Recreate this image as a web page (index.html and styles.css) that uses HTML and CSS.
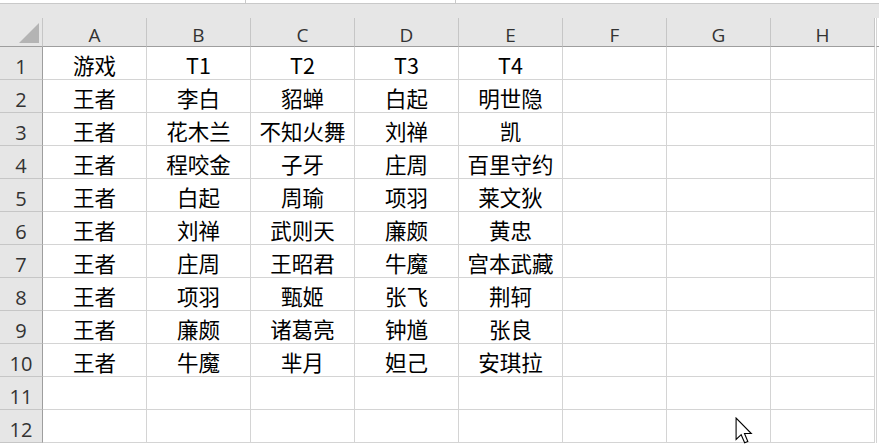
FILE: index.html
```html
<!DOCTYPE html>
<html lang="zh">
<head>
<meta charset="utf-8">
<link rel="stylesheet" href="styles.css">
</head>
<body>
<div class="sheet">
  <div class="topbar"><span class="seg s1"></span><span class="seg s2"></span></div>
  <div class="gap"></div>
  <div class="grid">
    <div class="corner"><span class="tri"></span></div>
    <div class="ch">A</div><div class="ch">B</div><div class="ch">C</div><div class="ch">D</div><div class="ch">E</div><div class="ch">F</div><div class="ch">G</div><div class="ch">H</div><div class="edge hedge"></div>

    <div class="rh">1</div><div class="c">游戏</div><div class="c">T1</div><div class="c">T2</div><div class="c">T3</div><div class="c">T4</div><div class="c"></div><div class="c"></div><div class="c"></div><div class="edge"></div>
    <div class="rh">2</div><div class="c">王者</div><div class="c">李白</div><div class="c">貂蝉</div><div class="c">白起</div><div class="c">明世隐</div><div class="c"></div><div class="c"></div><div class="c"></div><div class="edge"></div>
    <div class="rh">3</div><div class="c">王者</div><div class="c">花木兰</div><div class="c">不知火舞</div><div class="c">刘禅</div><div class="c">凯</div><div class="c"></div><div class="c"></div><div class="c"></div><div class="edge"></div>
    <div class="rh">4</div><div class="c">王者</div><div class="c">程咬金</div><div class="c">子牙</div><div class="c">庄周</div><div class="c">百里守约</div><div class="c"></div><div class="c"></div><div class="c"></div><div class="edge"></div>
    <div class="rh">5</div><div class="c">王者</div><div class="c">白起</div><div class="c">周瑜</div><div class="c">项羽</div><div class="c">莱文狄</div><div class="c"></div><div class="c"></div><div class="c"></div><div class="edge"></div>
    <div class="rh">6</div><div class="c">王者</div><div class="c">刘禅</div><div class="c">武则天</div><div class="c">廉颇</div><div class="c">黄忠</div><div class="c"></div><div class="c"></div><div class="c"></div><div class="edge"></div>
    <div class="rh">7</div><div class="c">王者</div><div class="c">庄周</div><div class="c">王昭君</div><div class="c">牛魔</div><div class="c">宫本武藏</div><div class="c"></div><div class="c"></div><div class="c"></div><div class="edge"></div>
    <div class="rh">8</div><div class="c">王者</div><div class="c">项羽</div><div class="c">甄姬</div><div class="c">张飞</div><div class="c">荆轲</div><div class="c"></div><div class="c"></div><div class="c"></div><div class="edge"></div>
    <div class="rh">9</div><div class="c">王者</div><div class="c">廉颇</div><div class="c">诸葛亮</div><div class="c">钟馗</div><div class="c">张良</div><div class="c"></div><div class="c"></div><div class="c"></div><div class="edge"></div>
    <div class="rh">10</div><div class="c">王者</div><div class="c">牛魔</div><div class="c">芈月</div><div class="c">妲己</div><div class="c">安琪拉</div><div class="c"></div><div class="c"></div><div class="c"></div><div class="edge"></div>
    <div class="rh">11</div><div class="c"></div><div class="c"></div><div class="c"></div><div class="c"></div><div class="c"></div><div class="c"></div><div class="c"></div><div class="c"></div><div class="edge"></div>
    <div class="rh">12</div><div class="c"></div><div class="c"></div><div class="c"></div><div class="c"></div><div class="c"></div><div class="c"></div><div class="c"></div><div class="c"></div><div class="edge"></div>
  </div>
  <svg class="cursor" width="19" height="29" viewBox="0 0 13 20">
    <path d="M0.7 0.7 L0.7 15.5 L4.2 12.2 L6.6 17.8 L8.8 16.9 L6.5 11.4 L11.2 11.4 Z" fill="#fff" stroke="#000" stroke-width="0.75" stroke-linejoin="miter"/>
  </svg>
</div>
</body>
</html>
```

FILE: styles.css
```css
html, body {
  margin: 0;
  padding: 0;
  background: #fff;
}
.sheet {
  position: relative;
  width: 879px;
  height: 446px;
  overflow: hidden;
  background: #fff;
}
.topbar {
  position: relative;
  height: 3px;
  background: #fff;
  border-bottom: 1px solid #c9c9c9;
}
.seg {
  position: absolute;
  top: 0;
  width: 1px;
  height: 4px;
  background: #c9c9c9;
}
.s1 { left: 245px; }
.s2 { left: 455px; }
.gap {
  height: 14px;
  background: #e6e6e6;
}
.grid {
  display: grid;
  grid-template-columns: 43px repeat(8, 104px) 4px;
  grid-template-rows: 29px repeat(12, 33px);
}
.corner {
  position: relative;
  background: #e6e6e6;
  border-right: 1px solid #c6c6c6;
  border-bottom: 1px solid #9e9e9e;
}
.tri {
  position: absolute;
  right: 3px;
  bottom: 3px;
  width: 0;
  height: 0;
  border-left: 20px solid transparent;
  border-bottom: 20px solid #b4b4b4;
}
.ch {
  background: #e6e6e6;
  border-right: 1px solid #c6c6c6;
  border-bottom: 1px solid #9e9e9e;
  display: flex;
  align-items: center;
  justify-content: center;
  padding-top: 5px;
  box-sizing: border-box;
  font-family: "Open Sans", "Liberation Sans", sans-serif;
  font-size: 19px;
  color: #333;
}
.hedge {
  background: #e6e6e6;
  border-bottom: 1px solid #9e9e9e;
}
.edge {
  background: #fff;
  border-left: 1px solid #d4d4d4;
  box-sizing: border-box;
  width: 3px;
  margin-left: 1px;
}
.rh {
  background: #e6e6e6;
  border-right: 1px solid #9e9e9e;
  border-bottom: 1px solid #c6c6c6;
  display: flex;
  align-items: center;
  justify-content: center;
  padding-top: 6px;
  box-sizing: border-box;
  font-family: "Open Sans", "Liberation Sans", sans-serif;
  font-size: 20px;
  color: #333;
}
.c {
  border-right: 1px solid #d4d4d4;
  border-bottom: 1px solid #d4d4d4;
  display: flex;
  align-items: center;
  justify-content: center;
  padding-top: 2px;
  box-sizing: border-box;
  font-family: "Noto Sans CJK SC", "Noto Sans", sans-serif;
  font-size: 21.5px;
  color: #000;
  white-space: nowrap;
}
.cursor {
  position: absolute;
  left: 735px;
  top: 417px;
}
```
